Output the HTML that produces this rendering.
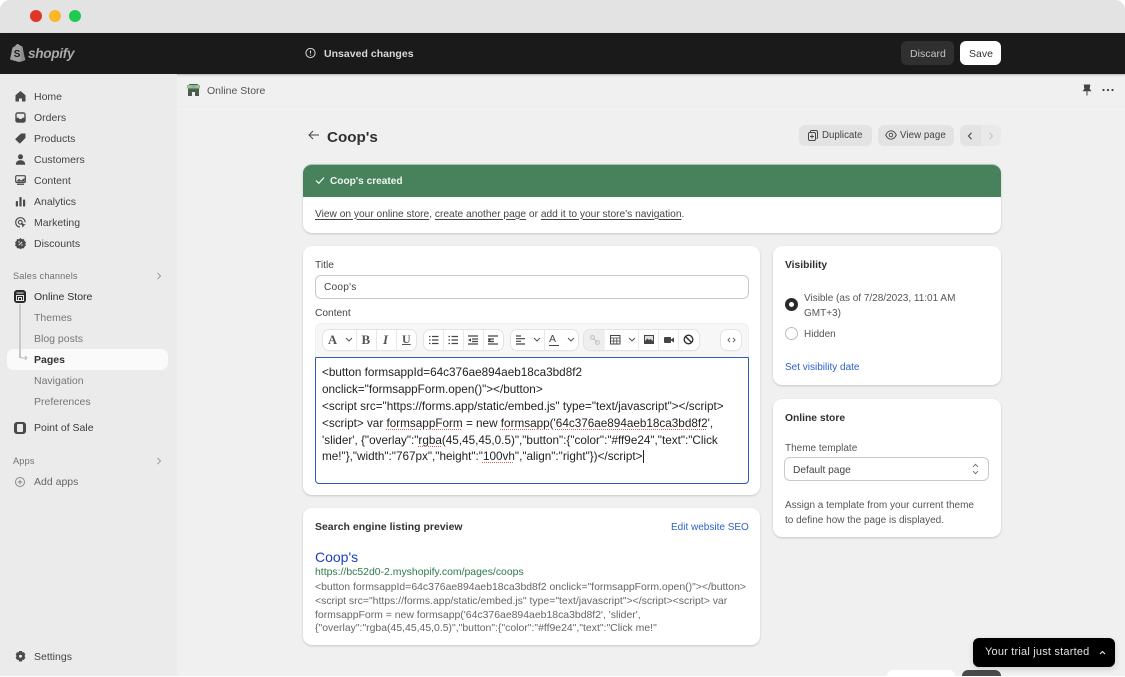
<!DOCTYPE html>
<html><head><meta charset="utf-8"><style>
*{box-sizing:border-box;margin:0;padding:0}
html,body{width:1125px;height:677px;overflow:hidden;background:#fff}
body{position:relative;font-family:"Liberation Sans",sans-serif;color:#303030}
.a{position:absolute}
.t{position:absolute;white-space:nowrap;font-size:10.5px;line-height:14px;letter-spacing:0;color:#3a3a3a}
.card{position:absolute;background:#fff;border-radius:9px;box-shadow:0 1px 2px rgba(0,0,0,.18)}
.nav{color:#444;}
.sub{color:#777}
.b{font-weight:bold}
svg{position:absolute;overflow:visible}
.tb{position:absolute;top:330px;height:20px;background:#fff;border-radius:6px;box-shadow:0 0 0 1px #e3e3e3,0 1px 1px rgba(0,0,0,.12)}
.sep{position:absolute;top:330px;width:1px;height:20px;background:#e8e8e8}
u{text-underline-offset:1.5px;text-decoration-thickness:.7px}
.w{text-decoration:underline dotted #dd5a55 1px;text-underline-offset:2px}
.ed{position:absolute;white-space:nowrap;font-size:11.73px;line-height:17px;color:#1f1f1f}
.sn{position:absolute;white-space:nowrap;font-size:10.45px;line-height:13.6px;color:#666}
</style></head><body>
<div class="a" style="left:0;top:0;width:1125px;height:676px;background:#f0f0f0;border-radius:10px 10px 0 0;overflow:hidden">
<div class="a" style="left:0;top:0;width:1125px;height:33px;background:#e3e3e3"></div>
<div class="a" style="left:30px;top:10px;width:12px;height:12px;border-radius:50%;background:#e0352b"></div>
<div class="a" style="left:49px;top:10px;width:12px;height:12px;border-radius:50%;background:#fdb52a"></div>
<div class="a" style="left:69px;top:10px;width:12px;height:12px;border-radius:50%;background:#1fcb4f"></div>
<div class="a" style="left:0;top:33px;width:1125px;height:41px;background:#1a1a1a;box-shadow:0 1px 2px rgba(0,0,0,.25)"></div>
<div class="a" style="left:0;top:74px;width:177px;height:603px;background:#ebebeb"></div>
<div class="a" style="left:177px;top:106px;width:948px;height:1px;background:#ececec"></div>
</div>

<!-- shopify logo -->
<svg style="left:10px;top:44px" width="16" height="18" viewBox="0 0 16 18"><path d="M0 15.500 2.500 3.600C3.500 3 4.500 2.600 5.100 2.300 5.700.8 6.700 0 7.900 0c.6 0 1 .4 1.200 1 .6 0 1 .2 1.200.8l1 .1 1.200.9L15 16l-6 2z" fill="#a0a0a0"/><path d="M11 1.900 15.500 16l-5 2z" fill="#8a8a8a"/><text x="3.800" y="13" font-size="10" font-weight="bold" font-family="Liberation Sans" fill="#1a1a1a">S</text></svg>
<span class="t b" style="left:28px;top:45px;font-size:13.600px;line-height:18px;font-style:italic;color:#a8a8a8;letter-spacing:-.3px">shopify</span>

<!-- topbar -->
<svg style="left:305px;top:47px" width="12" height="12" viewBox="0 0 12 12"><circle cx="5.500" cy="6" r="4.600" fill="none" stroke="#d8d8d8" stroke-width="1"/><path d="M5.500 3.500v3M5.500 7.700v.9" stroke="#d8d8d8" stroke-width="1.100"/></svg>
<span class="t b" style="left:324px;top:47px;color:#d8d8d8;font-size:10.500px;letter-spacing:.02px">Unsaved changes</span>
<div class="a" style="left:901px;top:41px;width:53px;height:24px;background:#303030;border-radius:6px"></div>
<span class="t" style="left:910px;top:46.500px;color:#c4c4c4;font-size:10.500px;letter-spacing:.05px">Discard</span>
<div class="a" style="left:960px;top:41px;width:41px;height:24px;background:#fff;border-radius:6px"></div>
<span class="t" style="left:969px;top:46.500px;color:#333;font-size:10.500px;letter-spacing:0">Save</span>

<!-- nav -->
<svg style="left:15px;top:91px" width="11" height="11" viewBox="0 0 11 11"><path d="M5.500 0 10.500 4.300v6.200H7V7.500H4v3H.5V4.300z" fill="#4a4a4a"/></svg>
<span class="t nav" style="left:34px;top:90px">Home</span>
<svg style="left:15px;top:112px" width="11" height="11" viewBox="0 0 11 11"><rect x=".3" y=".3" width="10.400" height="10.400" rx="2.200" fill="#4a4a4a"/><path d="M1.700 1.700h7.600v4H7.400L6.500 7H4.500L3.600 5.700H1.700z" fill="#ebebeb"/></svg>
<span class="t nav" style="left:34px;top:111px">Orders</span>
<svg style="left:15px;top:133px" width="11" height="11" viewBox="0 0 11 11"><path d="M.8 6.200 6.200 1h3.800v3.800L4.800 10z" fill="#4a4a4a" stroke="#4a4a4a" stroke-linejoin="round"/></svg>
<span class="t nav" style="left:34px;top:132px">Products</span>
<svg style="left:15px;top:154px" width="11" height="11" viewBox="0 0 11 11"><circle cx="5.500" cy="2.800" r="2.500" fill="#4a4a4a"/><path d="M.8 10.800C.8 7.500 3 6.300 5.500 6.300s4.700 1.200 4.700 4.500z" fill="#4a4a4a"/></svg>
<span class="t nav" style="left:34px;top:153px">Customers</span>
<svg style="left:15px;top:175px" width="11" height="11" viewBox="0 0 11 11"><rect x=".7" y=".7" width="9.600" height="6.800" rx="1" fill="#ebebeb" stroke="#4a4a4a" stroke-width="1.200"/><path d="M1.500 6.500 4 3.800l2 1.700 3.500-2.500v3.500z" fill="#4a4a4a"/><path d="M2 9.300h7" stroke="#4a4a4a" stroke-width="1.200"/></svg>
<span class="t nav" style="left:34px;top:174px">Content</span>
<svg style="left:15px;top:196px" width="11" height="11" viewBox="0 0 11 11"><rect x=".8" y="5" width="2.200" height="5.500" rx=".8" fill="#4a4a4a"/><rect x="4.400" y="1" width="2.200" height="9.500" rx=".8" fill="#4a4a4a"/><rect x="8" y="3.500" width="2.200" height="7" rx=".8" fill="#4a4a4a"/></svg>
<span class="t nav" style="left:34px;top:195px">Analytics</span>
<svg style="left:15px;top:217px" width="11" height="11" viewBox="0 0 11 11"><path d="M5 10C2.500 10 .7 8 .7 5.400S2.700.7 5.400.7s4.700 2 4.700 4.500" fill="none" stroke="#4a4a4a" stroke-width="1.200"/><circle cx="5.300" cy="5.300" r="1.900" fill="none" stroke="#4a4a4a" stroke-width="1.100"/><path d="M5.800 5.800l5 2-2 .8-.9 2.100z" fill="#4a4a4a"/></svg>
<span class="t nav" style="left:34px;top:216px">Marketing</span>
<svg style="left:15px;top:238px" width="11" height="11" viewBox="0 0 11 11"><path d="M5.500 0 7 1.200 9 1.100l.5 1.900L11 4.200 10.300 6 11 7.500 9.500 8.500 9 10.300 7 10.300 5.500 11.200 4 10.300 2 10.300 1.500 8.500 0 7.500 .7 5.700 0 4.200 1.500 3 2 1.100 4 1.200z" fill="#4a4a4a"/><path d="M3.800 7.200l3.400-3.400" stroke="#ebebeb"/><circle cx="4" cy="4" r=".7" fill="#ebebeb"/><circle cx="7" cy="7" r=".7" fill="#ebebeb"/></svg>
<span class="t nav" style="left:34px;top:236.500px">Discounts</span>

<span class="t" style="left:13px;top:269px;font-size:9.200px;color:#707070;letter-spacing:.17px">Sales channels</span>
<svg style="left:156px;top:272px" width="6" height="8" viewBox="0 0 6 8"><path d="M1.500 .8 4.500 4 1.500 7.200" fill="none" stroke="#9a9a9a"/></svg>
<div class="a" style="left:14px;top:290px;width:12px;height:13px;background:#2a2a2a;border-radius:3px"></div>
<svg style="left:14px;top:290px" width="12" height="13" viewBox="0 0 12 13"><path d="M2.500 3h7M2.500 5.500h7v5h-7zM4.500 10.500V7.500h3v3" fill="none" stroke="#e8e8e8" stroke-width="1"/></svg>
<span class="t" style="left:34px;top:290px;color:#303030">Online Store</span>
<div class="a" style="left:7px;top:349px;width:161px;height:21px;background:#fafafa;border-radius:7px"></div>
<div class="a" style="left:19px;top:304px;width:1.500px;height:54px;background:#c8c8c8"></div>
<svg style="left:19px;top:354px" width="10" height="8" viewBox="0 0 10 8"><path d="M.7 0c0 3 .6 4 2.500 4h5M6 2l2 2-2 2" fill="none" stroke="#bcbcbc" stroke-width=".9"/></svg>
<span class="t sub" style="left:34px;top:311px">Themes</span>
<span class="t sub" style="left:34px;top:332px">Blog posts</span>
<span class="t b" style="left:34px;top:353px;color:#303030">Pages</span>
<span class="t sub" style="left:34px;top:374px">Navigation</span>
<span class="t sub" style="left:34px;top:395px">Preferences</span>
<div class="a" style="left:14px;top:422px;width:12px;height:12px;background:#4a4a4a;border-radius:3px"></div>
<div class="a" style="left:17px;top:424px;width:6px;height:8px;background:#ebebeb;border-radius:1px"></div>
<span class="t" style="left:34px;top:421px;color:#3c3c3c">Point of Sale</span>
<span class="t" style="left:13px;top:454px;font-size:9.200px;color:#707070;letter-spacing:.17px">Apps</span>
<svg style="left:156px;top:457px" width="6" height="8" viewBox="0 0 6 8"><path d="M1.500 .8 4.500 4 1.500 7.200" fill="none" stroke="#9a9a9a"/></svg>
<svg style="left:15px;top:477px" width="11" height="11" viewBox="0 0 11 11"><circle cx="5" cy="5" r="4.500" fill="none" stroke="#8a8a8a"/><path d="M5 2.700v4.600M2.700 5h4.600" stroke="#8a8a8a"/></svg>
<span class="t" style="left:34px;top:475px;color:#666">Add apps</span>
<svg style="left:15px;top:651px" width="11" height="11" viewBox="0 0 11 11"><path d="M4 0h3l.4 1.500 1.500-.4 1.500 2.500-1 1.400 1 1.400L8.900 9l-1.500-.4L7 10.500H4l-.4-1.900L2.100 9 .6 6.400l1-1.400-1-1.400 1.500-2.500 1.500.4z" fill="#4a4a4a"/><circle cx="5.500" cy="5.200" r="1.500" fill="#ebebeb"/></svg>
<span class="t nav" style="left:34px;top:650px">Settings</span>

<!-- header -->
<svg style="left:186px;top:83px" width="15" height="15" viewBox="0 0 15 15"><path d="M2 2.500 3.500 1h8L13 2.500V13H9V9H6v4H2z" fill="#4d5a50"/><path d="M1 2h13v3.500H1z" fill="#8fbf8c"/><circle cx="3" cy="3.500" r="1" fill="#d6c34a"/><circle cx="7.500" cy="3.500" r="1" fill="#6ca8c9"/><circle cx="12" cy="3.500" r="1" fill="#d6c34a"/></svg>
<span class="t" style="left:207px;top:84px;color:#555">Online Store</span>
<svg style="left:1082px;top:84px" width="10" height="12" viewBox="0 0 10 12"><path d="M1.800 .5h6.400v1.200L7.600 4.800 9.500 7.200H5.500v4.300H4.500V7.200H.5L2.400 4.800 1.800 1.700z" fill="#444"/></svg>
<svg style="left:1102px;top:88px" width="12" height="4" viewBox="0 0 12 4"><circle cx="1.500" cy="2" r="1.100" fill="#444"/><circle cx="6" cy="2" r="1.100" fill="#444"/><circle cx="10.500" cy="2" r="1.100" fill="#444"/></svg>

<!-- title -->
<svg style="left:308px;top:130px" width="12" height="10" viewBox="0 0 12 10"><path d="M11 5H1M5 1 1 5l4 4" fill="none" stroke="#444" stroke-width="1"/></svg>
<span class="t b" style="left:327px;top:128px;font-size:15.200px;line-height:20px;color:#303030;letter-spacing:0">Coop's</span>
<div class="a" style="left:799px;top:125px;width:73px;height:21px;background:#e3e3e3;border-radius:6px"></div>
<svg style="left:808px;top:130px" width="10" height="11" viewBox="0 0 10 11"><rect x=".5" y="2.500" width="7" height="8" rx="1.500" fill="#e3e3e3" stroke="#444"/><path d="M2.500 2.200V1.500Q2.500.5 3.500.5H8Q9.500.5 9.500 2v5.500Q9.500 8.500 8.500 8.500" fill="none" stroke="#444"/><path d="M4 4.500v4M2 6.500h4" stroke="#444" stroke-width=".9"/></svg>
<span class="t" style="left:822px;top:129px;font-size:9.700px;color:#444;letter-spacing:0">Duplicate</span>
<div class="a" style="left:878px;top:125px;width:76px;height:21px;background:#e3e3e3;border-radius:6px"></div>
<svg style="left:885px;top:130px" width="12" height="10" viewBox="0 0 12 10"><path d="M.7 5C2 2.200 4 .8 6 .8s4 1.400 5.300 4.200C10 7.800 8 9.200 6 9.200S2 7.800.7 5z" fill="none" stroke="#444" stroke-width=".9"/><circle cx="6" cy="5" r="1.800" fill="none" stroke="#444" stroke-width=".9"/></svg>
<span class="t" style="left:900px;top:129px;font-size:9.700px;color:#444;letter-spacing:.08px">View page</span>
<div class="a" style="left:960px;top:125px;width:21px;height:21px;background:#e3e3e3;border-radius:6px 0 0 6px"></div>
<div class="a" style="left:981px;top:125px;width:20px;height:21px;background:#e9e9e9;border-radius:0 6px 6px 0"></div>
<svg style="left:967px;top:132px" width="6" height="8" viewBox="0 0 6 8"><path d="M4.500 .8 1.500 4l3 3.200" fill="none" stroke="#444" stroke-width="1.100"/></svg>
<svg style="left:988px;top:132px" width="6" height="8" viewBox="0 0 6 8"><path d="M1.500 .8 4.500 4l-3 3.200" fill="none" stroke="#c4c4c4" stroke-width="1.100"/></svg>

<!-- banner -->
<div class="card" style="left:303px;top:164px;width:698px;height:69px"></div>
<div class="a" style="left:303px;top:164px;width:698px;height:33px;background:#47825c;border-radius:9px 9px 0 0;border-top:1px solid #a8c4b0"></div>
<svg style="left:315px;top:176px" width="10" height="9" viewBox="0 0 10 9"><path d="M1 4.500 3.800 7.300 9 1.500" fill="none" stroke="#fff" stroke-width="1.100"/></svg>
<span class="t b" style="left:330px;top:175px;color:#f0f5f1;font-size:10.100px;letter-spacing:0">Coop's created</span>
<span class="t" style="left:315px;top:207.500px;color:#444;font-size:10.200px;letter-spacing:0"><u>View on your online store</u>, <u>create another page</u> or <u>add it to your store's navigation</u>.</span>

<!-- main card -->
<div class="card" style="left:303px;top:246px;width:457px;height:249px"></div>
<span class="t" style="left:315px;top:258.500px;color:#444;font-size:10.200px">Title</span>
<div class="a" style="left:315px;top:275px;width:434px;height:24px;background:#fff;border:1px solid #c9c9c9;border-radius:6px"></div>
<span class="t" style="left:324px;top:281px;color:#444;font-size:10.200px;letter-spacing:.2px">Coop's</span>
<span class="t" style="left:315px;top:307px;color:#444;font-size:10.200px">Content</span>
<div class="a" style="left:315px;top:323px;width:434px;height:35px;background:#f7f7f7;border:1px solid #efefef;border-bottom:0;border-radius:6px 6px 0 0"></div>
<div class="tb" style="left:323px;width:93px"></div>
<div class="sep" style="left:356px"></div><div class="sep" style="left:376px"></div><div class="sep" style="left:396px"></div>
<span class="t b" style="left:328px;top:333px;font-family:'Liberation Serif',serif;font-size:12.500px;color:#555">A</span>
<svg style="left:345px;top:337px" width="8" height="6" viewBox="0 0 8 6"><path d="M1 1 4 4 7 1" fill="none" stroke="#555"/></svg>
<span class="t b" style="left:361.500px;top:333px;font-family:'Liberation Serif',serif;font-size:13px;color:#555">B</span>
<span class="t b" style="left:383px;top:333px;font-family:'Liberation Serif',serif;font-style:italic;font-size:13px;color:#555">I</span>
<span class="t b" style="left:402px;top:332px;font-family:'Liberation Serif',serif;font-size:12px;color:#555;text-decoration:underline">U</span>
<div class="tb" style="left:424px;width:79px"></div>
<div class="sep" style="left:443px"></div><div class="sep" style="left:463px"></div><div class="sep" style="left:483px"></div>
<svg style="left:428px;top:335px" width="72" height="10" viewBox="0 0 72 10" stroke="#444" stroke-width="1.200"><path d="M1 1.500h1.500M1 5h1.500M1 8.500h1.500M4 1.500h6.500M4 5h6.500M4 8.500h6.500M20.500 1.500h1.500M20.500 5h1.500M20.500 8.500h1.500M23.500 1.500h6.500M23.500 5h6.500M23.500 8.500h6.500M40 1h10M44 4h6M44 6.500h6M40 9h10M60 1h10M60 4h6M60 6.500h6M60 9h10"/><path d="M43 3.200v3.600L40 5zM60.500 3.200v3.600L63 5z" fill="#444" stroke="none"/></svg>
<div class="tb" style="left:511px;width:67px"></div>
<div class="sep" style="left:544px"></div>
<svg style="left:516px;top:335px" width="11" height="10" viewBox="0 0 11 10" stroke="#444" stroke-width="1.200"><path d="M0 1h5M0 3.700h9M0 6.300h5M0 9h9"/></svg>
<svg style="left:533px;top:337px" width="8" height="6" viewBox="0 0 8 6"><path d="M1 1 4 4 7 1" fill="none" stroke="#555"/></svg>
<span class="t" style="left:549px;top:332px;font-size:10.500px;color:#444">A</span>
<div class="a" style="left:549px;top:345px;width:10px;height:1px;background:#444"></div>
<svg style="left:567px;top:337px" width="8" height="6" viewBox="0 0 8 6"><path d="M1 1 4 4 7 1" fill="none" stroke="#555"/></svg>
<div class="tb" style="left:584px;width:115px"></div>
<div class="a" style="left:584px;top:330px;width:21px;height:20px;background:#eee;border-radius:6px 0 0 6px"></div>
<div class="sep" style="left:638px"></div><div class="sep" style="left:658px"></div><div class="sep" style="left:678px"></div>
<svg style="left:590px;top:335px" width="10" height="10" viewBox="0 0 10 10"><circle cx="2.500" cy="2.500" r="1.900" fill="none" stroke="#c0c0c0"/><circle cx="7.500" cy="7.500" r="1.900" fill="none" stroke="#c0c0c0"/><path d="M3 3l4 4" stroke="#c0c0c0"/></svg>
<svg style="left:610px;top:335px" width="11" height="10" viewBox="0 0 11 10"><rect x=".5" y=".5" width="9.500" height="8.500" fill="none" stroke="#444"/><path d="M.5 3h9.500M.5 6h9.500M3.700 3v6M6.800 3v6" stroke="#444" stroke-width=".8"/></svg>
<svg style="left:628px;top:337px" width="8" height="6" viewBox="0 0 8 6"><path d="M1 1 4 4 7 1" fill="none" stroke="#555"/></svg>
<svg style="left:644px;top:335px" width="10" height="10" viewBox="0 0 10 10"><rect width="10" height="9" fill="#444"/><rect x="1" y="1" width="8" height="5" fill="#ddd"/><path d="M1 6 3.500 3.500 5 5l1.500-1L9 6z" fill="#444"/></svg>
<svg style="left:664px;top:336px" width="10" height="8" viewBox="0 0 10 8"><rect y="1" width="7" height="6" rx="1" fill="#444"/><path d="M7 3.500 10 1.500v5L7 4.500z" fill="#444"/></svg>
<svg style="left:683px;top:334px" width="11" height="11" viewBox="0 0 11 11"><circle cx="5.500" cy="5.500" r="4.300" fill="none" stroke="#333" stroke-width="1.400"/><path d="M2.500 2.500l6 6" stroke="#333" stroke-width="1.400"/></svg>
<div class="tb" style="left:721px;width:20px"></div>
<svg style="left:727px;top:337px" width="9" height="6" viewBox="0 0 9 6"><path d="M3 .8 1 3l2 2.200M6 .8 8 3 6 5.200" fill="none" stroke="#555" stroke-width=".9"/></svg>
<div class="a" style="left:315px;top:357px;width:434px;height:127px;background:#fff;border:1.500px solid #2f5cb5;border-radius:1px 1px 4px 4px"></div>
<div class="ed" style="left:322px;top:364px">&lt;button formsappId=64c376ae894aeb18ca3bd8f2</div>
<div class="ed" style="left:322px;top:381px">onclick="formsappForm.open()"&gt;&lt;/button&gt;</div>
<div class="ed" style="left:322px;top:398px">&lt;script src="https://forms.app/static/embed.js" type="text/javascript"&gt;&lt;/script&gt;</div>
<div class="ed" style="left:322px;top:415px">&lt;script&gt; var <span class="w">formsappForm</span> = new <span class="w">formsapp</span>('<span class="w">64c376ae894aeb18ca3bd8f2</span>',</div>
<div class="ed" style="left:322px;top:432px">'slider', {"overlay":"<span class="w">rgba</span>(45,45,45,0.5)","button":{"color":"#ff9e24","text":"Click</div>
<div class="ed" style="left:322px;top:448px">me!"},"width":"767px","height":"<span class="w">100vh</span>","align":"right"})&lt;/script&gt;<span style="border-left:1px solid #222;margin-left:.5px"></span></div>

<!-- SEO -->
<div class="card" style="left:303px;top:508px;width:457px;height:137px"></div>
<span class="t b" style="left:315px;top:521px;font-size:10.400px;color:#303030;letter-spacing:.05px">Search engine listing preview</span>
<span class="t" style="left:671px;top:520.500px;font-size:10px;color:#2c5fc9;letter-spacing:0">Edit website SEO</span>
<span class="a" style="left:315px;top:549px;font-size:14px;line-height:17px;color:#1a3fc4;white-space:nowrap">Coop's</span>
<span class="a" style="left:315px;top:566px;font-size:10.450px;line-height:14px;color:#2d7a4b;white-space:nowrap">https://bc52d0-2.myshopify.com/pages/coops</span>
<div class="sn" style="left:315px;top:581px">&lt;button formsappId=64c376ae894aeb18ca3bd8f2 onclick="formsappForm.open()"&gt;&lt;/button&gt;</div>
<div class="sn" style="left:315px;top:594.500px">&lt;script src="https://forms.app/static/embed.js" type="text/javascript"&gt;&lt;/script&gt;&lt;script&gt; var</div>
<div class="sn" style="left:315px;top:608.500px">formsappForm = new formsapp('64c376ae894aeb18ca3bd8f2', 'slider',</div>
<div class="sn" style="left:315px;top:621.500px">{"overlay":"rgba(45,45,45,0.5)","button":{"color":"#ff9e24","text":"Click me!"</div>

<!-- visibility -->
<div class="card" style="left:773px;top:246px;width:228px;height:139px"></div>
<span class="t b" style="left:785px;top:259px;color:#303030;font-size:10.300px">Visibility</span>
<div class="a" style="left:785px;top:298px;width:13px;height:13px;border-radius:50%;border:4px solid #2a2a2a;background:#fff"></div>
<span class="t" style="left:804px;top:292px;color:#555;font-size:10px;letter-spacing:0">Visible (as of 7/28/2023, 11:01 AM</span>
<span class="t" style="left:804px;top:306.500px;color:#555;font-size:10px;letter-spacing:0">GMT+3)</span>
<div class="a" style="left:785px;top:327px;width:13px;height:13px;border-radius:50%;border:1px solid #bbb;background:#fff"></div>
<span class="t" style="left:804px;top:327.500px;color:#555;font-size:10px;letter-spacing:0">Hidden</span>
<span class="t" style="left:785px;top:361px;color:#2c5fc9;font-size:10px;letter-spacing:0">Set visibility date</span>

<!-- online store -->
<div class="card" style="left:773px;top:399px;width:228px;height:138px"></div>
<span class="t b" style="left:785px;top:412px;color:#303030;font-size:10.300px">Online store</span>
<span class="t" style="left:785px;top:441.500px;color:#555;font-size:10px;letter-spacing:0">Theme template</span>
<div class="a" style="left:784px;top:457px;width:205px;height:24px;background:#fff;border:1px solid #c9c9c9;border-radius:6px"></div>
<span class="t" style="left:793px;top:464px;color:#444;font-size:10.200px;letter-spacing:0">Default page</span>
<svg style="left:972px;top:463px" width="7" height="12" viewBox="0 0 7 12"><path d="M1 4 3.500 1.300 6 4M1 8l2.500 2.700L6 8" fill="none" stroke="#666" stroke-width=".9"/></svg>
<span class="t" style="left:785px;top:499px;color:#555;font-size:10px;letter-spacing:0">Assign a template from your current theme</span>
<span class="t" style="left:785px;top:514px;color:#555;font-size:10px;letter-spacing:0">to define how the page is displayed.</span>

<!-- bottom -->
<div class="a" style="left:887px;top:670px;width:68px;height:6px;background:#fff;border-radius:6px 6px 0 0"></div>
<div class="a" style="left:962px;top:670px;width:39px;height:6px;background:#4a4a4a;border-radius:6px 6px 0 0"></div>
<div class="a" style="left:973px;top:638px;width:142px;height:29px;background:#000;border-radius:6px;box-shadow:0 2px 6px rgba(0,0,0,.15)"></div>
<span class="t" style="left:985px;top:645px;color:#e2e2e2;font-size:11px;line-height:15px;letter-spacing:.2px">Your trial just started</span>
<svg style="left:1099px;top:650px" width="7" height="5" viewBox="0 0 7 5"><path d="M1 4 3.500 1.500 6 4" fill="none" stroke="#eee" stroke-width="1.100"/></svg>
</body></html>
